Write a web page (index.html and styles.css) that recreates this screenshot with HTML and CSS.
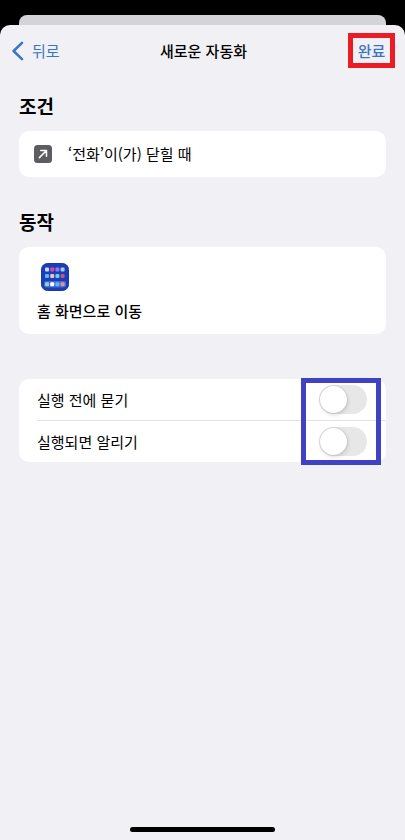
FILE: index.html
```html
<!DOCTYPE html>
<html lang="ko">
<head>
<meta charset="utf-8">
<meta name="viewport" content="width=device-width, initial-scale=1">
<title>새로운 자동화</title>
<link rel="stylesheet" href="styles.css">
</head>
<body>
<div class="back-sheet"></div>
<div class="sheet">
  <header class="nav">
    <a class="back" href="#">
      <svg class="chevron" viewBox="0 0 12 20" aria-hidden="true"><path d="M10 1.8 1.6 10l8.4 8.2"/></svg>
      <span>뒤로</span>
    </a>
    <h1 class="title">새로운 자동화</h1>
    <button class="done" type="button">완료</button>
  </header>
  <main class="content">
    <section class="section">
      <h2 class="heading">조건</h2>
      <div class="card condition">
        <svg class="app-icon" viewBox="0 0 18 18" aria-hidden="true">
          <rect width="18" height="18" rx="3.5" fill="#5d5d61"/>
          <path d="M5.4 12.6 12 6M6.8 5.5h5.7v5.7" fill="none" stroke="#fff" stroke-width="1.5" stroke-linecap="round" stroke-linejoin="round"/>
        </svg>
        <span>‘전화’이(가) 닫힐 때</span>
      </div>
    </section>
    <section class="section">
      <h2 class="heading">동작</h2>
      <div class="card action">
        <svg class="home-icon" viewBox="0 0 28 28" aria-hidden="true">
          <rect x=".5" y=".5" width="27" height="27" rx="6" fill="#1c3cb8" stroke="#1a38a8"/>
          <rect x="3" y="18" width="22" height="6.5" rx="2" fill="#4668d2"/>
          <g>
            <rect x="4" y="4.5" width="4" height="4" rx="1" fill="#d3d5fa"/>
            <rect x="9.2" y="4.5" width="4" height="4" rx="1" fill="#c8529c"/>
            <rect x="14.4" y="4.5" width="4" height="4" rx="1" fill="#a06cf0"/>
            <rect x="19.6" y="4.5" width="4" height="4" rx="1" fill="#a3cfc6"/>
            <rect x="4" y="11" width="4" height="4" rx="1" fill="#5cb4f4"/>
            <rect x="9.2" y="11" width="4" height="4" rx="1" fill="#e2c7b8"/>
            <rect x="14.4" y="11" width="4" height="4" rx="1" fill="#68d0ec"/>
            <rect x="19.6" y="11" width="4" height="4" rx="1" fill="#c55484"/>
            <rect x="4" y="19.2" width="4" height="4" rx="1" fill="#86d8c2"/>
            <rect x="9.2" y="19.2" width="4" height="4" rx="1" fill="#fff"/>
            <rect x="14.4" y="19.2" width="4" height="4" rx="1" fill="#62b4fa"/>
            <rect x="19.6" y="19.2" width="4" height="4" rx="1" fill="#cf9c9c"/>
          </g>
        </svg>
        <span class="action-name">홈 화면으로 이동</span>
      </div>
    </section>
    <div class="card options">
      <label class="option"><span>실행 전에 묻기</span><input class="switch" type="checkbox" role="switch"></label>
      <label class="option"><span>실행되면 알리기</span><input class="switch" type="checkbox" role="switch"></label>
      <div class="highlight"></div>
    </div>
  </main>
  <div class="home-bar"></div>
</div>
</body>
</html>
```
FILE: styles.css
```css
* {
  box-sizing: border-box;
}

body {
  margin: 0;
  min-height: 100vh;
  padding-top: 15px;
  display: flex;
  flex-direction: column;
  background: #000;
  color: #000;
  font: 15px/24px "Noto Sans CJK KR", sans-serif;
}

.back-sheet {
  height: 20px;
  margin: 0 19px -10px;
  border-radius: 8px 8px 0 0;
  background: #d4d3d8;
}

.sheet {
  flex: 1;
  display: flex;
  flex-direction: column;
  border-radius: 10px 10px 0 0;
  background: #f1f0f5;
}

.nav {
  display: grid;
  grid-template-columns: 1fr auto 1fr;
  align-items: center;
  height: 51px;
  padding: 0 10px 0 12px;
}

.back {
  display: flex;
  align-items: center;
  gap: 8px;
  color: #3a74c8;
  text-decoration: none;
}

.chevron {
  width: 12px;
  height: 20px;
  fill: none;
  stroke: currentColor;
  stroke-width: 2.5;
  stroke-linecap: round;
  stroke-linejoin: round;
}

.title {
  margin: 0;
  font-size: 15px;
  font-weight: 500;
}

.done {
  justify-self: end;
  width: 47px;
  height: 35px;
  padding: 0;
  border: 5px solid #ec1c24;
  background: none;
  color: #3a74c8;
  font: inherit;
  font-weight: 500;
}

.content {
  flex: 1;
  padding: 14px 19px 0;
}

.heading {
  margin: 0;
  padding-bottom: 9px;
  font-size: 19px;
  line-height: 32px;
  font-weight: 700;
}

.card {
  border-radius: 10px;
  background: #fff;
}

.section {
  margin-bottom: 29px;
}

.condition {
  display: flex;
  align-items: center;
  gap: 16px;
  height: 46px;
  padding: 0 15px;
}

.app-icon {
  width: 18px;
  height: 18px;
}

.action {
  display: flex;
  flex-direction: column;
  gap: 8px;
  padding: 16px 18px 11px;
}

.home-icon {
  width: 28px;
  height: 28px;
  margin-left: 4px;
}

.action-name {
  font-weight: 500;
}

.options {
  position: relative;
  margin-top: 45px;
}

.option {
  display: flex;
  align-items: center;
  justify-content: space-between;
  height: 41px;
  margin-left: 18px;
  padding-right: 19px;
}

.option + .option {
  height: 42px;
  border-top: 1px solid #e3e3e5;
}

.switch {
  appearance: none;
  width: 48px;
  height: 29px;
  margin: 0;
  padding: 1px;
  border-radius: 15px;
  background: #e7e7e8;
}

.switch::before {
  content: "";
  display: block;
  width: 27px;
  height: 27px;
  border-radius: 50%;
  background: #fff;
  box-shadow: 0 0 2px rgba(0, 0, 0, 0.2), 1px 2px 4px rgba(0, 0, 0, 0.12);
}

.switch:checked {
  background: #34c759;
}

.switch:checked::before {
  margin-left: auto;
}

.highlight {
  position: absolute;
  top: -1px;
  right: 5px;
  bottom: -3px;
  width: 80px;
  border: 5px solid #4042c4;
  pointer-events: none;
}

.home-bar {
  width: 145px;
  height: 5px;
  margin: 0 auto 8px;
  border-radius: 3px;
  background: #000;
}
```
